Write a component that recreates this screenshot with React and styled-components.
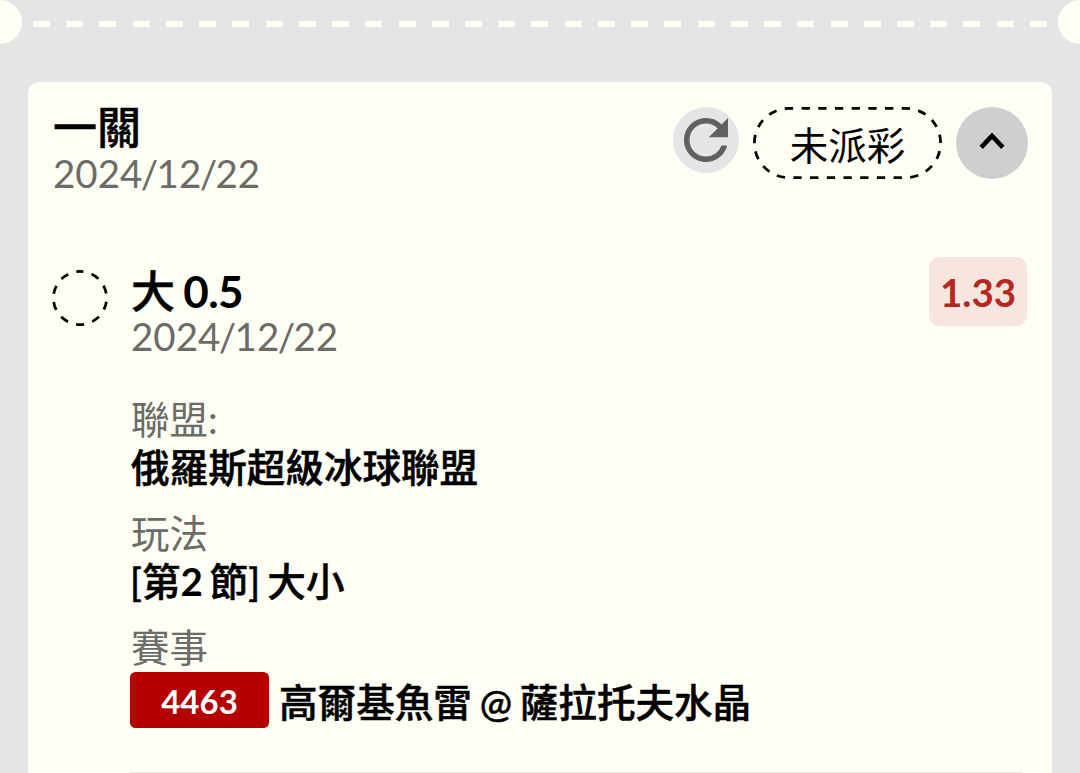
import React from 'react'
import styled, { createGlobalStyle } from 'styled-components'

const App = () => {
    return (
        <Page>
            <GlobalStyle />
            <Divider>
                <Notch />
                <Dashes />
                <Notch />
            </Divider>

            <Card>
                <Header>
                    <Heading>
                        <Title>一關</Title>
                        <PlayDate value="2024/12/22" />
                    </Heading>
                    <Actions>
                        <RefreshButton>
                            <RefreshIcon />
                        </RefreshButton>
                        <Status>
                            <PillOutline />
                            <StatusText>未派彩</StatusText>
                        </Status>
                        <ToggleButton>
                            <ChevronIcon />
                        </ToggleButton>
                    </Actions>
                </Header>

                <Bet>
                    <Pending />
                    <BetBody>
                        <BetTop>
                            <Heading>
                                <Title $low>大 <Num>0.5</Num></Title>
                                <PlayDate value="2024/12/22" />
                            </Heading>
                            <Odds>1.33</Odds>
                        </BetTop>
                        <Details>
                            <Detail>
                                <Label>聯盟:</Label>
                                <Value>俄羅斯超級冰球聯盟</Value>
                            </Detail>
                            <Detail>
                                <Label>玩法</Label>
                                <Value $flush>[第<Num>2</Num> 節] 大小</Value>
                            </Detail>
                            <Detail>
                                <Label>賽事</Label>
                                <Match>
                                    <Code>4463</Code>
                                    <Teams>高爾基魚雷 @ 薩拉托夫水晶</Teams>
                                </Match>
                            </Detail>
                        </Details>
                        <Rule />
                    </BetBody>
                </Bet>
            </Card>
        </Page>
    )
}

const PlayDate = ({ value }) => {
    const [year, month, day] = value.split('/')

    return (
        <DateText>
            {year}<Slash>/</Slash>{month}<Slash>/</Slash>{day}
        </DateText>
    )
}

const RefreshIcon = () => (
    <svg width="66" height="66" viewBox="0 0 24 24" fill="#5f6062">
        <path d="M17.65 6.35A7.958 7.958 0 0 0 12 4c-4.42 0-7.99 3.58-7.99 8s3.57 8 7.99 8c3.73 0 6.84-2.55 7.73-6h-2.08A5.99 5.99 0 0 1 12 18c-3.31 0-6-2.69-6-6s2.69-6 6-6c1.66 0 3.14.69 4.22 1.78L13 11h7V4l-2.35 2.35z" />
    </svg>
)

const ChevronIcon = () => (
    <svg width="72" height="72" fill="none" stroke="#000" strokeWidth="4.6">
        <path d="M25.2 40.3 36 28.9l10.8 11.4" />
    </svg>
)

const PillOutline = () => (
    <Outline width="189" height="72" fill="none" stroke="#000" strokeWidth="2.75">
        <rect x="1.4" y="1.4" width="186.2" height="69.2" rx="34.6" strokeDasharray="8.3 8.4" strokeDashoffset="4.15" />
    </Outline>
)

const Pending = () => (
    <Ring width="56" height="56" fill="none" stroke="#000" strokeWidth="2.75">
        <rect x="1.4" y="1.4" width="53.2" height="53.2" rx="26.6" strokeDasharray="8.3 8.41" strokeDashoffset="4.8" />
    </Ring>
)

const GlobalStyle = createGlobalStyle`
    * {
        box-sizing: border-box;
    }

    body {
        margin: 0;
        background: #e4e5e7;
        overflow: hidden;
    }
`

const Page = styled.div`
    height: 773px;
    overflow: hidden;
    display: flex;
    flex-direction: column;
    background: #e4e5e7;
    color: #000;
    font-family: Lato, "Noto Sans CJK TC", sans-serif;
    font-size: 38.5px;
`

const Divider = styled.div`
    display: flex;
    align-items: center;
    height: 44px;
    margin: 0 -22px 38px;
    flex-shrink: 0;
`

const Notch = styled.div`
    width: 44px;
    height: 44px;
    border-radius: 50%;
    background: #fffef5;
`

const Dashes = styled.div`
    flex: 1;
    height: 6px;
    margin: 4px 11px 0;
    background: repeating-linear-gradient(90deg, #fffef5 0 17px, transparent 17px 33.23px);
`

const Card = styled.div`
    flex: 1;
    margin: 0 28px;
    padding: 25px 25px 0;
    border-radius: 11px 11px 0 0;
    background: #fffef5;
`

const Header = styled.div`
    display: flex;
    justify-content: space-between;
    height: 150px;
`

const Heading = styled.div`
    display: flex;
    flex-direction: column;
`

const Title = styled.div`
    margin: ${props => props.$low ? '1px 0 -1px' : '0'};
    font-size: 44px;
    line-height: 41px;
    font-weight: 500;
    word-spacing: -3px;
    -webkit-text-stroke: 0.5px;
    white-space: nowrap;
`

const Num = styled.span`
    font-weight: 700;
    letter-spacing: -0.5px;
    -webkit-text-stroke: 0;
`

const DateText = styled.div`
    line-height: 50px;
    color: #6b6b68;
`

const Slash = styled.span`
    margin: 0 -1.6px;
`

const Actions = styled.div`
    display: flex;
    gap: 14px;
    margin-right: -0.5px;
`

const RefreshButton = styled.div`
    width: 66px;
    height: 66px;
    border-radius: 50%;
    background: #e4e5e7;
`

const Status = styled.div`
    position: relative;
    width: 189px;
    height: 72px;
    display: flex;
    align-items: center;
    justify-content: center;
`

const Outline = styled.svg`
    position: absolute;
    inset: 0;
`

const StatusText = styled.span`
    padding-top: 3px;
    line-height: 46px;
`

const ToggleButton = styled.div`
    width: 72px;
    height: 72px;
    margin-left: -0.5px;
    border-radius: 50%;
    background: #cfcfcf;
`

const Bet = styled.div`
    display: flex;
    gap: 22px;
`

const Ring = styled.svg`
    flex-shrink: 0;
    margin-top: 13px;
    margin-left: -1px;
`

const BetBody = styled.div`
    flex: 1;
`

const BetTop = styled.div`
    display: flex;
    justify-content: space-between;
    padding: 13px 0 0 1px;
    height: 138px;
`

const Odds = styled.div`
    width: 98px;
    height: 69px;
    margin-top: -13px;
    border-radius: 11px;
    background: #f7e6e0;
    color: #b7261f;
    font-weight: 700;
    line-height: 71px;
    text-align: center;
`

const Details = styled.div`
    display: flex;
    flex-direction: column;
    gap: 18px;
`

const Detail = styled.div`
    display: flex;
    flex-direction: column;
`

const Label = styled.div`
    padding-left: 1px;
    line-height: 48px;
    color: #6b6b68;
`

const Value = styled.div`
    padding-left: ${props => props.$flush ? '0' : '1px'};
    font-size: 38.6px;
    line-height: 48px;
    font-weight: 500;
    word-spacing: -2.5px;
    -webkit-text-stroke: 0.5px;
    white-space: nowrap;
`

const Match = styled.div`
    display: flex;
    align-items: center;
    gap: 10px;
    padding-top: 1px;
`

const Teams = styled(Value)`
    padding: 3px 0 0;
    word-spacing: -2px;
`

const Code = styled.div`
    width: 139px;
    height: 56px;
    border-radius: 5.5px;
    background: #b40000;
    color: #fff;
    font-size: 33px;
    font-weight: 700;
    line-height: 58px;
    text-align: center;
`

const Rule = styled.div`
    height: 3px;
    margin: 44px 5px 0 0;
    background: #e4e5e7;
`

export default App
